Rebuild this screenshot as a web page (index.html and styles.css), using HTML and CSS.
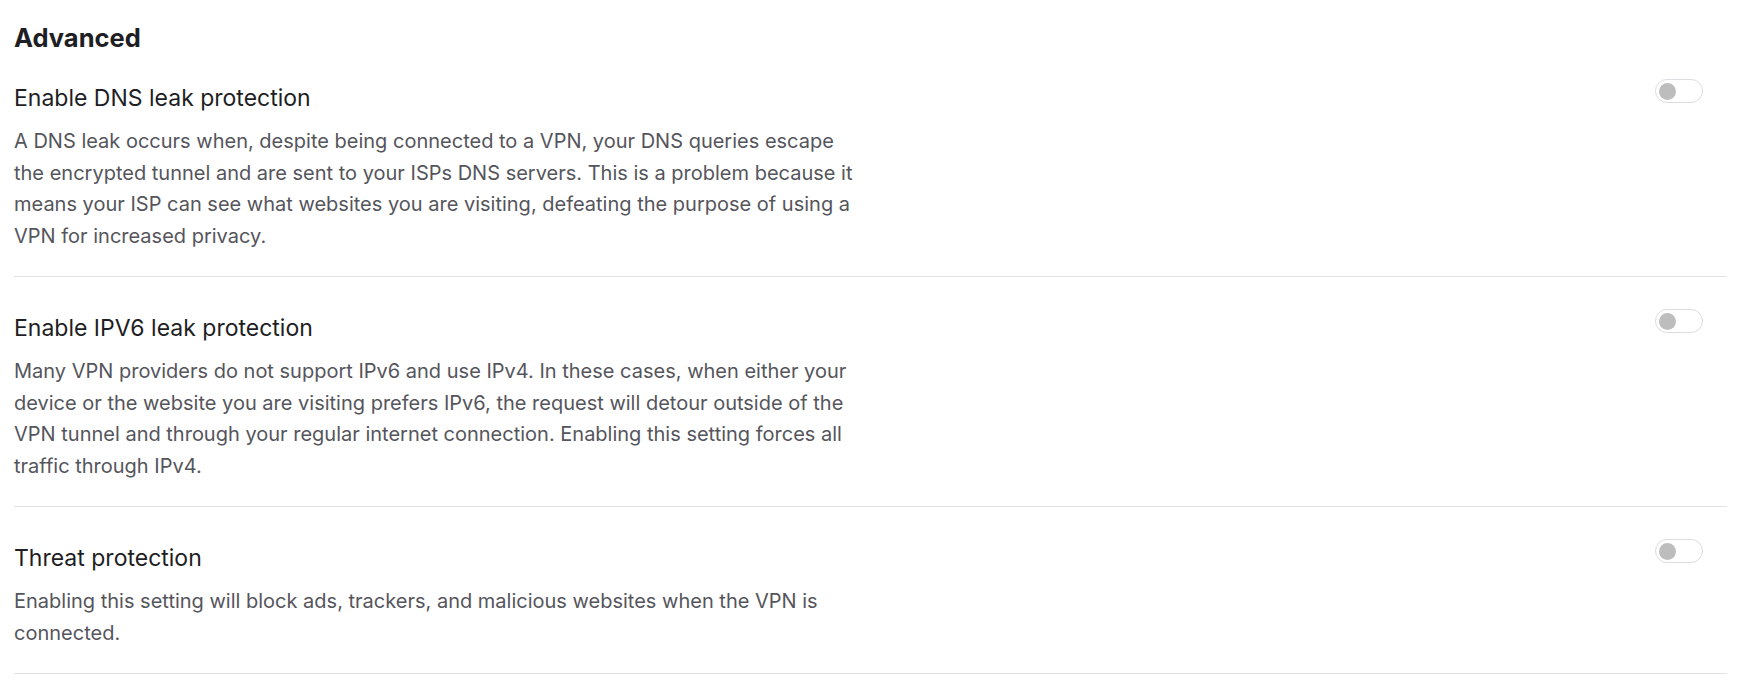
FILE: index.html
```html
<!DOCTYPE html>
<html lang="en">
<head>
<meta charset="utf-8">
<title>Advanced</title>
<link rel="stylesheet" href="styles.css">
</head>
<body>
<section class="settings">
  <h2 class="heading">Advanced</h2>
  <div class="row first">
    <div class="info">
      <h3 class="title">Enable DNS leak protection</h3>
      <p class="desc">A DNS leak occurs when, despite being connected to a VPN, your DNS queries escape the encrypted tunnel and are sent to your ISPs DNS servers. This is a problem because it means your ISP can see what websites you are visiting, defeating the purpose of using a VPN for increased privacy.</p>
    </div>
    <span class="toggle"><span class="knob"></span></span>
  </div>
  <div class="row">
    <div class="info">
      <h3 class="title">Enable IPV6 leak protection</h3>
      <p class="desc">Many VPN providers do not support IPv6 and use IPv4. In these cases, when either your device or the website you are visiting prefers IPv6, the request will detour outside of the VPN tunnel and through your regular internet connection. Enabling this setting forces all traffic through IPv4.</p>
    </div>
    <span class="toggle"><span class="knob"></span></span>
  </div>
  <div class="row">
    <div class="info">
      <h3 class="title">Threat protection</h3>
      <p class="desc">Enabling this setting will block ads, trackers, and malicious websites when the VPN is connected.</p>
    </div>
    <span class="toggle"><span class="knob"></span></span>
  </div>
</section>
</body>
</html>
```
FILE: styles.css
```css
* { box-sizing: border-box; }
html, body { margin: 0; padding: 0; background: #ffffff; }
body {
  font-family: Inter, "Open Sans", sans-serif;
  color: #1e1e24;
}
.settings {
  width: 1713px;
  margin-left: 14px;
  padding-top: 20px;
}
.heading {
  margin: 0;
  font-size: 25.5px;
  line-height: 36px;
  font-weight: 700;
  color: #1e1e24;
}
.row {
  display: flex;
  justify-content: space-between;
  align-items: flex-start;
  padding: 35px 0 24px;
  border-bottom: 1px solid #e2e2e4;
}
.row.first { padding-top: 26px; }
.info { width: 847px; }
.title {
  margin: 0 0 12px;
  font-size: 23px;
  line-height: 32px;
  font-weight: 400;
  color: #1e1e24;
}
.desc {
  margin: 0;
  font-size: 20px;
  line-height: 31.5px;
  color: #55555c;
}
.toggle {
  display: flex;
  align-items: center;
  width: 48px;
  height: 24px;
  margin-top: -3px;
  margin-right: 24px;
  padding: 0 3px;
  border: 1px solid #dcdce0;
  border-radius: 12px;
  flex-shrink: 0;
}
.knob {
  width: 17px;
  height: 17px;
  border-radius: 50%;
  background: #bdbdbd;
}
```
